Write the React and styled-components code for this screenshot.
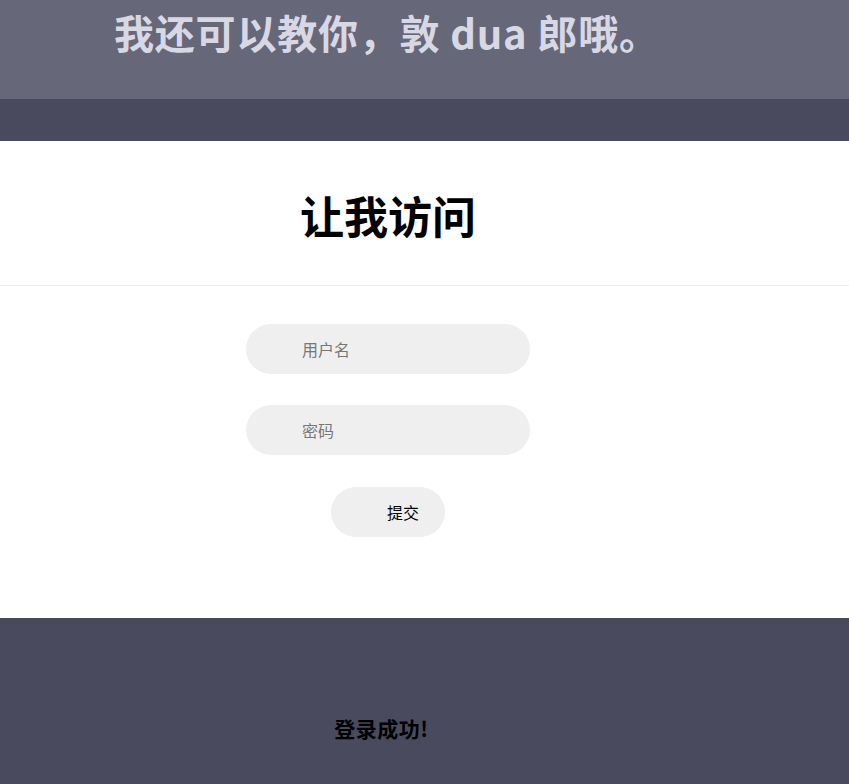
import React from 'react';
import styled, { createGlobalStyle } from 'styled-components';

const GlobalStyle = createGlobalStyle`
  body {
    margin: 0;
    font-family: "Noto Sans CJK SC", "Noto Sans", sans-serif;
    background: #4a4a5e;
  }
  * { box-sizing: border-box; }
`;

const Banner = styled.header`
  background: #666779;
  height: 99px;
  padding-left: 114px;
  h1 {
    margin: 0;
    padding-top: 2px;
    font-size: 40px;
    font-weight: 700;
    line-height: 60px;
    color: #d8d8e4;
    letter-spacing: 0.8px;
  }
`;

const Band = styled.div`
  background: #4a4a5e;
  height: 42px;
`;

const Main = styled.main`
  background: #fff;
  height: 477px;
`;

const TitleRow = styled.div`
  height: 145px;
  border-bottom: 1px solid #ececec;
  h2 {
    width: 776px;
    height: 100%;
    margin: 0;
    padding-top: 4px;
    display: flex;
    align-items: center;
    justify-content: center;
    font-size: 44px;
    font-weight: 700;
    color: #000;
  }
`;

const Form = styled.form`
  width: 776px;
  display: flex;
  flex-direction: column;
  align-items: center;
  gap: 31px;
  padding-top: 38px;
`;

const Field = styled.input`
  width: 284px;
  height: 50px;
  border: none;
  outline: none;
  border-radius: 25px;
  background: #efefef;
  padding-left: 56px;
  font-family: inherit;
  font-size: 16px;
  color: #222;
  &::placeholder { color: #777; }
`;

const Submit = styled.button`
  width: 114px;
  height: 50px;
  margin-top: 1px;
  border: none;
  border-radius: 25px;
  background: #efefef;
  padding-left: 56px;
  text-align: left;
  font-family: inherit;
  font-size: 16px;
  color: #000;
`;

const Footer = styled.footer`
  background: #4a4a5e;
  height: 166px;
  width: 776px;
  display: flex;
  align-items: center;
  justify-content: center;
  padding: 54px 13px 0 0;
  p {
    margin: 0;
    font-size: 21px;
    font-weight: 700;
    letter-spacing: 0.5px;
    color: #000;
  }
`;

const App = () => {
  return (
    <>
      <GlobalStyle />
      <Banner>
        <h1>我还可以教你，敦 dua 郎哦。</h1>
      </Banner>
      <Band />
      <Main>
        <TitleRow>
          <h2>让我访问</h2>
        </TitleRow>
        <Form onSubmit={(e) => e.preventDefault()}>
          <Field type="text" placeholder="用户名" />
          <Field type="password" placeholder="密码" />
          <Submit type="submit">提交</Submit>
        </Form>
      </Main>
      <Footer>
        <p>登录成功!</p>
      </Footer>
    </>
  );
};

export default App;
